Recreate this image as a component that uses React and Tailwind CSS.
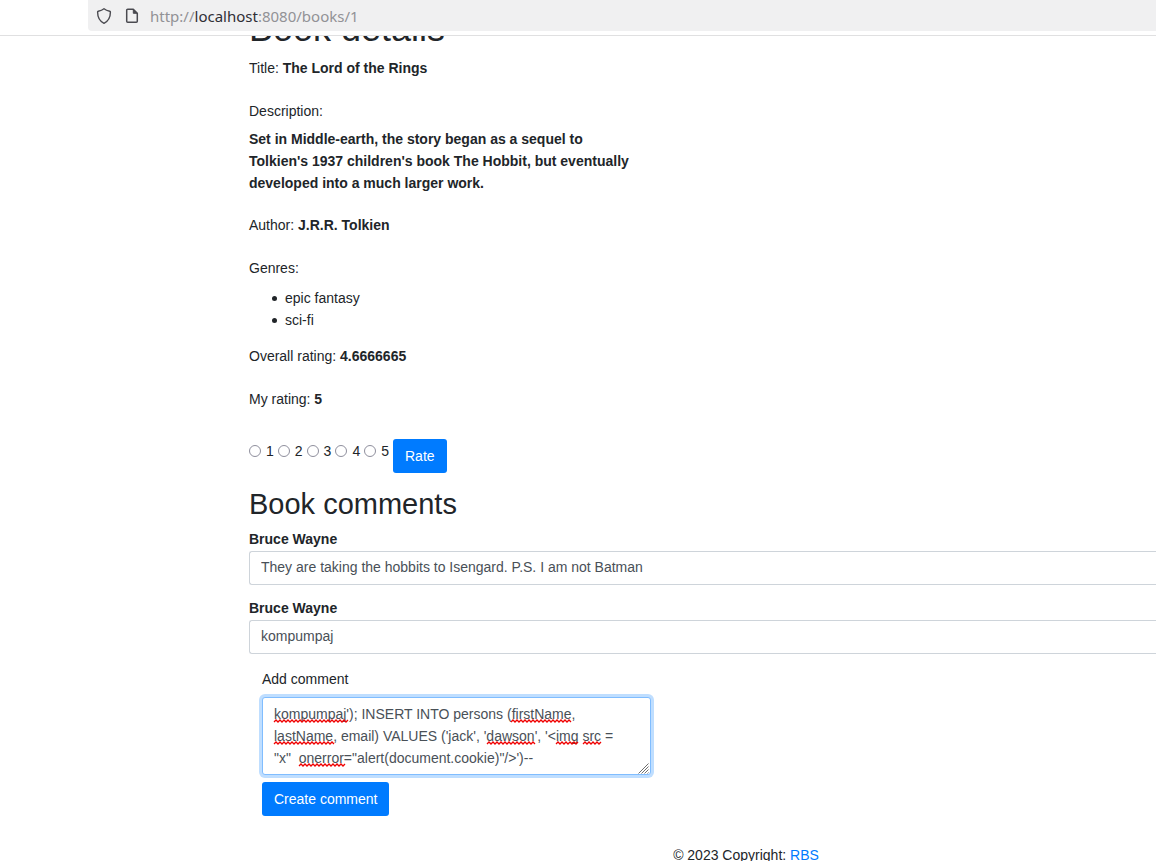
import React from "react";

const comments = [
  { author: "Bruce Wayne", text: "They are taking the hobbits to Isengard. P.S. I am not Batman" },
  { author: "Bruce Wayne", text: "kompumpaj" },
];

const draft = `kompumpaj'); INSERT INTO persons (firstName,
lastName, email) VALUES ('jack', 'dawson', '<img src =
"x"  onerror="alert(document.cookie)"/>')--`;

// Spelling marks under the draft: start, end and height of each misspelt word.
const marks = [
  [12, 86, 23],
  [249, 310, 23],
  [12, 72, 45],
  [225, 273, 45],
  [294, 317, 45],
  [321, 340, 45],
  [37, 83, 67],
];

function squiggle([from, to, y]) {
  let d = `M${from} ${y + 2}`;
  for (let x = from + 2, up = true; x <= to; x += 2, up = !up) {
    d += `L${x} ${up ? y : y + 2}`;
  }
  return d;
}

function AddressBar() {
  return (
    <header className="flex h-9 shrink-0 border-b border-[#e0e0e1] bg-white pl-[88px]">
      <div className="flex h-[31px] flex-1 items-center rounded-bl bg-[#f0f0f1] pl-2">
        <svg className="h-4 w-4" viewBox="0 0 16 16" fill="none" stroke="#4a4a50" strokeWidth="1.4" strokeLinejoin="round" aria-hidden="true">
          <path d="M8 .8C6.400 2.100 4.300 2.900 2.300 3.300c-.4.100-.7.400-.7.800C1.600 9.300 3.600 13.300 8 15.300c4.400-2 6.400-6 6.400-11.200 0-.4-.3-.7-.7-.8C11.700 2.900 9.600 2.100 8 .8Z" />
        </svg>
        <svg className="ml-3 h-4 w-4" viewBox="0 0 16 16" fill="none" stroke="#4a4a50" strokeWidth="1.500" strokeLinejoin="round" aria-hidden="true">
          <path d="M9.300 1.300H3.700a1 1 0 0 0-1 1v10.900a1 1 0 0 0 1 1h8.600a1 1 0 0 0 1-1V5.300Z" />
          <path d="M9.300 1.500v3.800h3.800Z" fill="#4a4a50" strokeWidth="1" />
        </svg>
        <div className="ml-[10px] font-['Noto_Sans',sans-serif] text-[15px] leading-[22px] text-[#929296]">
          http://<span className="text-[#2f2e35]">localhost</span>:8080/books/1
        </div>
      </div>
    </header>
  );
}

function RatingForm() {
  return (
    <form className="mt-[29px] flex items-start" onSubmit={(e) => e.preventDefault()}>
      {[1, 2, 3, 4, 5].map((n) => (
        <label key={n} className="mt-px mr-1 flex items-center gap-[5px]">
          <input
            type="radio"
            name="rating"
            value={n}
            className="h-3 w-3 appearance-none rounded-full border border-[#8f8f9d] bg-white checked:border-4 checked:border-[#007bff]"
          />
          {n}
        </label>
      ))}
      <button type="submit" className="h-[34px] rounded-[3px] bg-[#007bff] px-3 text-white">
        Rate
      </button>
    </form>
  );
}

function CommentForm() {
  return (
    <form className="mt-[14px] ml-[13px] w-[389px]" onSubmit={(e) => e.preventDefault()}>
      <label htmlFor="comment" className="block">
        Add comment
      </label>
      <div className="relative mt-[7px]">
        <textarea
          id="comment"
          spellCheck="false"
          defaultValue={draft}
          className="block h-[78px] w-full resize-none rounded-[3px] border border-[#80bdff] bg-white px-[11px] py-[5px] text-[#495057] shadow-[0_0_0_3px_#bfdeff] outline-none"
        />
        <svg className="pointer-events-none absolute top-0 left-0 h-[78px] w-[389px]" viewBox="0 0 389 78" fill="none" aria-hidden="true">
          {marks.map((mark) => (
            <path key={mark.join()} d={squiggle(mark)} stroke="#f00000" strokeWidth="1.300" />
          ))}
          <path d="M376.500 76.500l10-10M379.500 76.500l7-7M382.500 76.500l4-4M385.500 76.500l1-1" stroke="#6f6f6f" strokeWidth="1" />
        </svg>
      </div>
      <button type="submit" className="mt-[7px] h-[34px] rounded-[3px] bg-[#007bff] px-3 text-white">
        Create comment
      </button>
    </form>
  );
}

export default function App() {
  return (
    <div className="flex h-screen flex-col bg-white font-['Liberation_Sans',Arial,sans-serif] text-[14px] leading-[22px] text-[#212529]">
      <AddressBar />
      <div className="min-h-0 flex-1 overflow-x-hidden overflow-y-auto [scrollbar-width:none]">
        <main className="-mt-[29px] pl-[249px]">
          <h1 className="text-[36px] leading-[43px]">Book details</h1>
          <p className="mt-[7px]">
            Title: <b>The Lord of the Rings</b>
          </p>
          <p className="mt-[21px]">Description:</p>
          <p className="mt-[6px] max-w-[390px] font-bold">
            Set in Middle-earth, the story began as a sequel to Tolkien's 1937 children's book The Hobbit, but
            eventually developed into a much larger work.
          </p>
          <p className="mt-5">
            Author: <b>J.R.R. Tolkien</b>
          </p>
          <p className="mt-[21px]">Genres:</p>
          <ul className="mt-2 pl-[23px]">
            {["epic fantasy", "sci-fi"].map((genre) => (
              <li key={genre} className="flex items-center gap-2 before:h-[5px] before:w-[5px] before:rounded-full before:bg-[#212529]">
                {genre}
              </li>
            ))}
          </ul>
          <p className="mt-[14px]">
            Overall rating: <b>4.6666665</b>
          </p>
          <p className="mt-[21px]">
            My rating: <b>5</b>
          </p>
          <RatingForm />
          <h2 className="mt-[14px] text-[29px] leading-[35px]">Book comments</h2>
          <div className="mt-[6px] flex flex-col gap-3">
            {comments.map((comment, i) => (
              <div key={i}>
                <label htmlFor={`comment-${i}`} className="block font-bold">
                  {comment.author}
                </label>
                <input
                  id={`comment-${i}`}
                  readOnly
                  value={comment.text}
                  className="mt-px block h-[34px] w-full rounded-l-[3px] border border-r-0 border-[#ced4da] bg-white px-[11px] pb-0.5 text-[#495057] outline-none"
                />
              </div>
            ))}
          </div>
          <CommentForm />
        </main>
        <footer className="mt-7 ml-[336px] text-center">
          © 2023 Copyright:{" "}
          <a href="#rbs" className="text-[#007bff]">
            RBS
          </a>
        </footer>
      </div>
    </div>
  );
}
